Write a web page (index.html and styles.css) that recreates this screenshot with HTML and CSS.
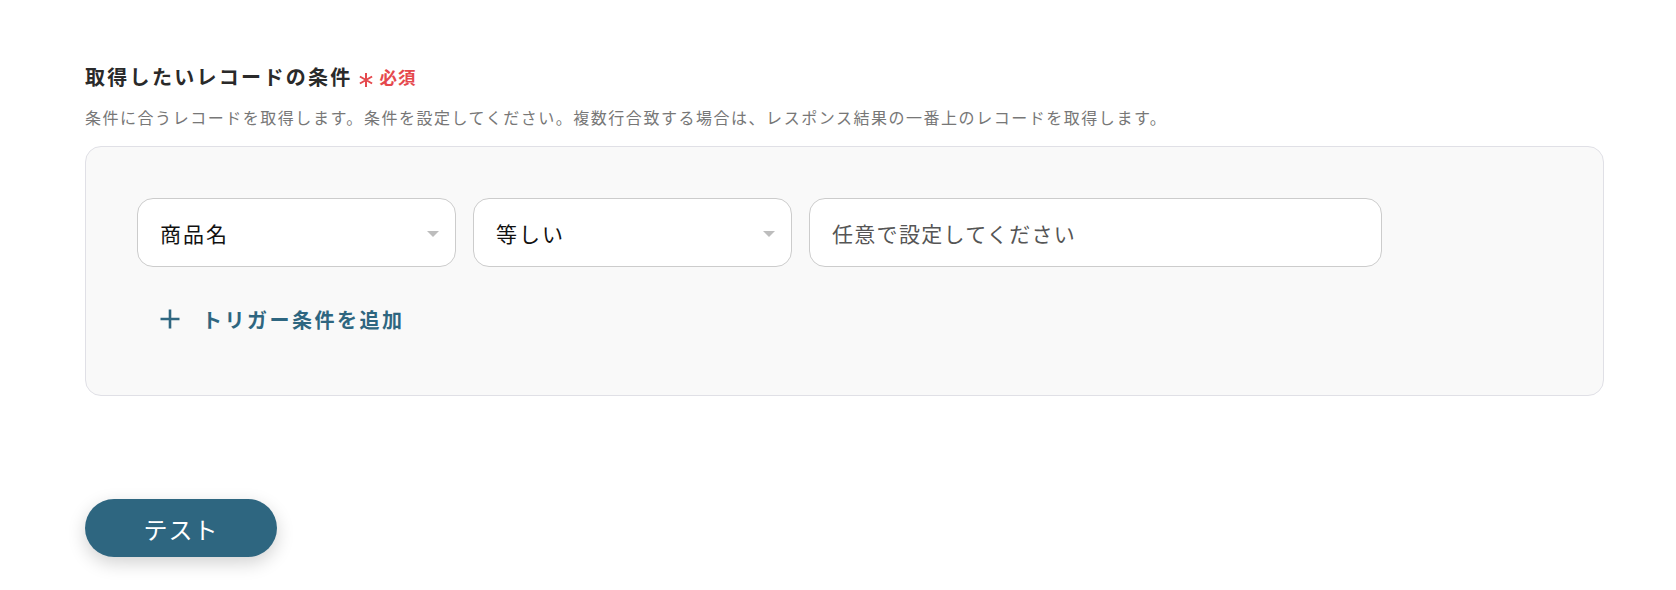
FILE: index.html
```html
<!DOCTYPE html>
<html lang="ja">
<head>
<meta charset="utf-8">
<title>条件</title>
<link rel="stylesheet" href="styles.css">
</head>
<body>
<div class="page">
  <div class="field">
    <div class="label-row">
      <span class="label">取得したいレコードの条件</span>
      <svg class="req-star" width="16" height="16" viewBox="0 0 16 16" aria-hidden="true">
        <path d="M8 1V15M1.9 4.5L14.1 11.5M1.9 11.5L14.1 4.5" stroke="#e5484d" stroke-width="2" fill="none"/>
      </svg>
      <span class="req">必須</span>
    </div>
    <p class="desc">条件に合うレコードを取得します。条件を設定してください。複数行合致する場合は、レスポンス結果の一番上のレコードを取得します。</p>
    <div class="panel">
      <div class="cond-row">
        <div class="select">
          <span class="select-text">商品名</span>
          <span class="caret"></span>
        </div>
        <div class="select">
          <span class="select-text">等しい</span>
          <span class="caret"></span>
        </div>
        <div class="input">
          <span class="placeholder">任意で設定してください</span>
        </div>
      </div>
      <div class="add-row">
        <svg class="plus" width="22" height="22" viewBox="0 0 22 22" aria-hidden="true">
          <path d="M11 1.5V20.5M1.5 11H20.5" stroke="#2e6680" stroke-width="2.6" fill="none"/>
        </svg>
        <span class="add-text">トリガー条件を追加</span>
      </div>
    </div>
  </div>
  <div class="actions">
    <button class="test-btn">テスト</button>
  </div>
</div>
</body>
</html>
```
FILE: styles.css
```css
html, body {
  margin: 0;
  padding: 0;
  background: #ffffff;
}
body {
  font-family: "Noto Sans CJK JP", "Noto Sans", sans-serif;
  color: #222;
  min-height: 590px;
}
.page {
  padding: 62px 72px 40px 85px;
}
.label-row {
  display: flex;
  align-items: center;
  height: 30px;
}
.label {
  font-size: 20px;
  font-weight: 700;
  letter-spacing: 2.3px;
  color: #2a2a2a;
  line-height: 30px;
}
.req-star {
  display: block;
  margin-left: 5px;
  margin-top: 5px;
}
.req {
  color: #e5484d;
  font-size: 17.5px;
  font-weight: 700;
  margin-left: 6px;
  letter-spacing: 1px;
  line-height: 30px;
}
.desc {
  margin: 13px 0 0 0;
  font-size: 16px;
  line-height: 24px;
  letter-spacing: 1.53px;
  color: #777;
}
.panel {
  margin-top: 17px;
  background: #f9f9f9;
  border: 1px solid #e0e0e6;
  border-radius: 16px;
  padding: 51px 51px 54px 51px;
  height: 143px;
}
.cond-row {
  display: flex;
  gap: 17px;
}
.select, .input {
  box-sizing: border-box;
  height: 69px;
  background: #fff;
  border: 1px solid #cccccc;
  border-radius: 16px;
  display: flex;
  align-items: center;
  padding: 0 16px 0 22px;
}
.select {
  width: 319px;
  justify-content: space-between;
}
.input {
  width: 573px;
}
.select-text {
  font-size: 21px;
  letter-spacing: 2px;
  color: #111;
}
.placeholder {
  font-size: 21px;
  letter-spacing: 1.3px;
  color: #555;
}
.caret {
  width: 0;
  height: 0;
  border-left: 6px solid transparent;
  border-right: 6px solid transparent;
  border-top: 6px solid #bdbdbd;
  margin-top: 2px;
}
.add-row {
  margin-top: 30px;
  height: 44px;
  display: flex;
  align-items: center;
  padding-left: 22px;
}
.plus {
  display: block;
}
.add-text {
  margin-left: 21px;
  font-size: 20px;
  font-weight: 700;
  letter-spacing: 2.5px;
  color: #2e6680;
}
.actions {
  margin-top: 103px;
}
.test-btn {
  width: 192px;
  height: 58px;
  border: none;
  border-radius: 29px;
  background: #2e6680;
  color: #fff;
  font-family: "Noto Sans CJK JP", "Noto Sans", sans-serif;
  font-size: 24px;
  letter-spacing: 1px;
  box-shadow: 0 6px 18px rgba(0, 0, 0, 0.18);
  cursor: pointer;
  padding: 0;
}
```
